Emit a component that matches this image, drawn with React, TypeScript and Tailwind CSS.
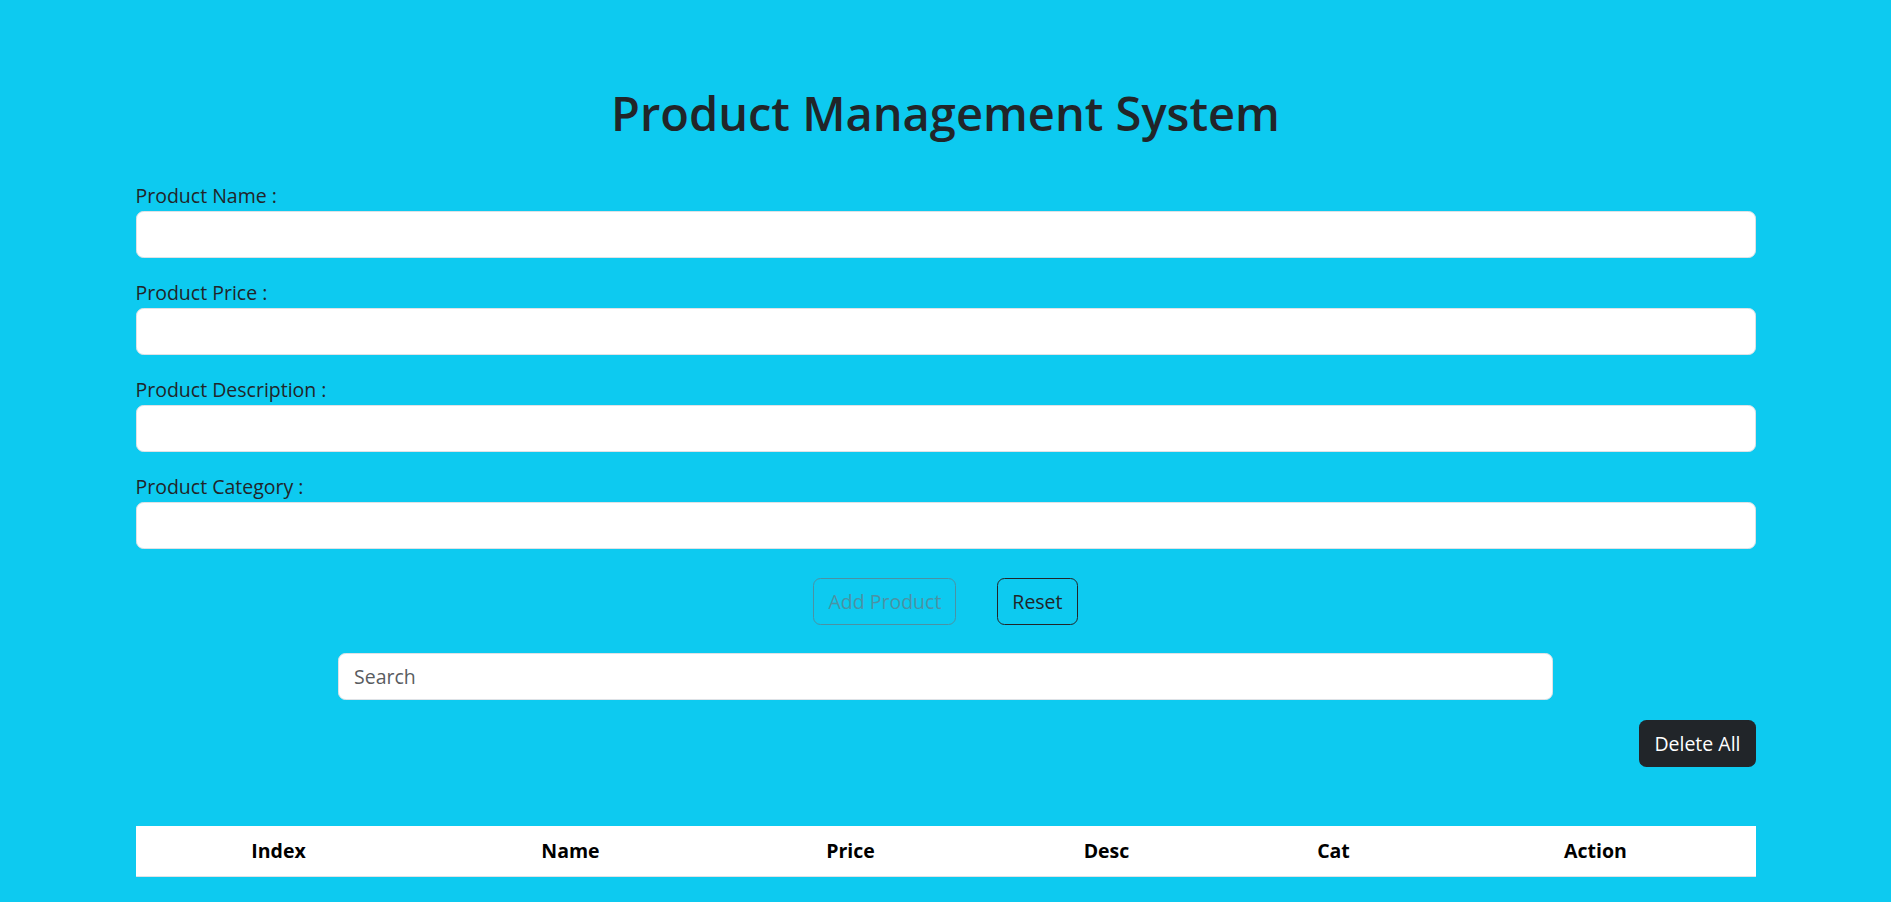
import { useState } from 'react'

const fields = [
  { key: 'name', label: 'Product Name :' },
  { key: 'price', label: 'Product Price :' },
  { key: 'desc', label: 'Product Description :' },
  { key: 'cat', label: 'Product Category :' },
]

const columns = [
  { title: 'Index', w: 'w-[286px]' },
  { title: 'Name', w: 'w-[298px]' },
  { title: 'Price', w: 'w-[262px]' },
  { title: 'Desc', w: 'w-[250px]' },
  { title: 'Cat', w: 'w-[204px]' },
  { title: 'Action', w: 'w-[320px]' },
]

export default function App() {
  const [values, setValues] = useState<Record<string, string>>({})
  const [search, setSearch] = useState('')

  const filled = fields.every((f) => (values[f.key] ?? '').trim() !== '')

  return (
    <div className="min-h-screen bg-[#0dcaf0] text-[#212529] font-['Open_Sans',sans-serif]">
      <div className="mx-auto max-w-[1650px] px-[15px] pt-[85px]">
        <h1 className="mb-[10px] text-center text-[47px] font-semibold leading-[1.2]">
          Product Management System
        </h1>

        <form className="mt-[40px]" onSubmit={(e) => e.preventDefault()}>
          {fields.map((f) => (
            <div key={f.key} className="mb-[20px]">
              <label className="block text-[19.5px] leading-[30px]">{f.label}</label>
              <input
                value={values[f.key] ?? ''}
                onChange={(e) => setValues({ ...values, [f.key]: e.target.value })}
                className="block h-[47px] w-full rounded-[7.5px] border border-[#dee2e6] bg-white px-[15px] text-[19.5px] outline-none"
              />
            </div>
          ))}

          <div className="flex justify-center gap-[41px] pt-[9px]">
            <button
              type="submit"
              disabled={!filled}
              className="h-[47px] rounded-[7.5px] border border-[#6c757d] px-[14px] text-[19.5px] text-[#6c757d] disabled:opacity-65"
            >
              Add Product
            </button>
            <button
              type="button"
              onClick={() => setValues({})}
              className="h-[47px] rounded-[7.5px] border border-[#212529] px-[14px] text-[19.5px] text-[#212529]"
            >
              Reset
            </button>
          </div>
        </form>

        <div className="mt-[28px] flex justify-center">
          <input
            value={search}
            onChange={(e) => setSearch(e.target.value)}
            placeholder="Search"
            className="h-[47px] w-[1215px] rounded-[7.5px] border border-[#dee2e6] bg-white px-[15px] text-[19.5px] outline-none placeholder:text-[#595c5f]"
          />
        </div>

        <div className="mt-[20px] flex justify-end">
          <button className="h-[47px] rounded-[7.5px] bg-[#212529] px-[15px] text-[19.5px] text-white">
            Delete All
          </button>
        </div>

        <table className="mt-[59px] w-full table-fixed border-collapse bg-white">
          <thead>
            <tr className="border-b border-[#dee2e6]">
              {columns.map((c) => (
                <th key={c.title} className={`${c.w} p-[10px] text-center text-[19.5px] font-bold leading-[30px] text-black`}>
                  {c.title}
                </th>
              ))}
            </tr>
          </thead>
          <tbody />
        </table>
      </div>
    </div>
  )
}
